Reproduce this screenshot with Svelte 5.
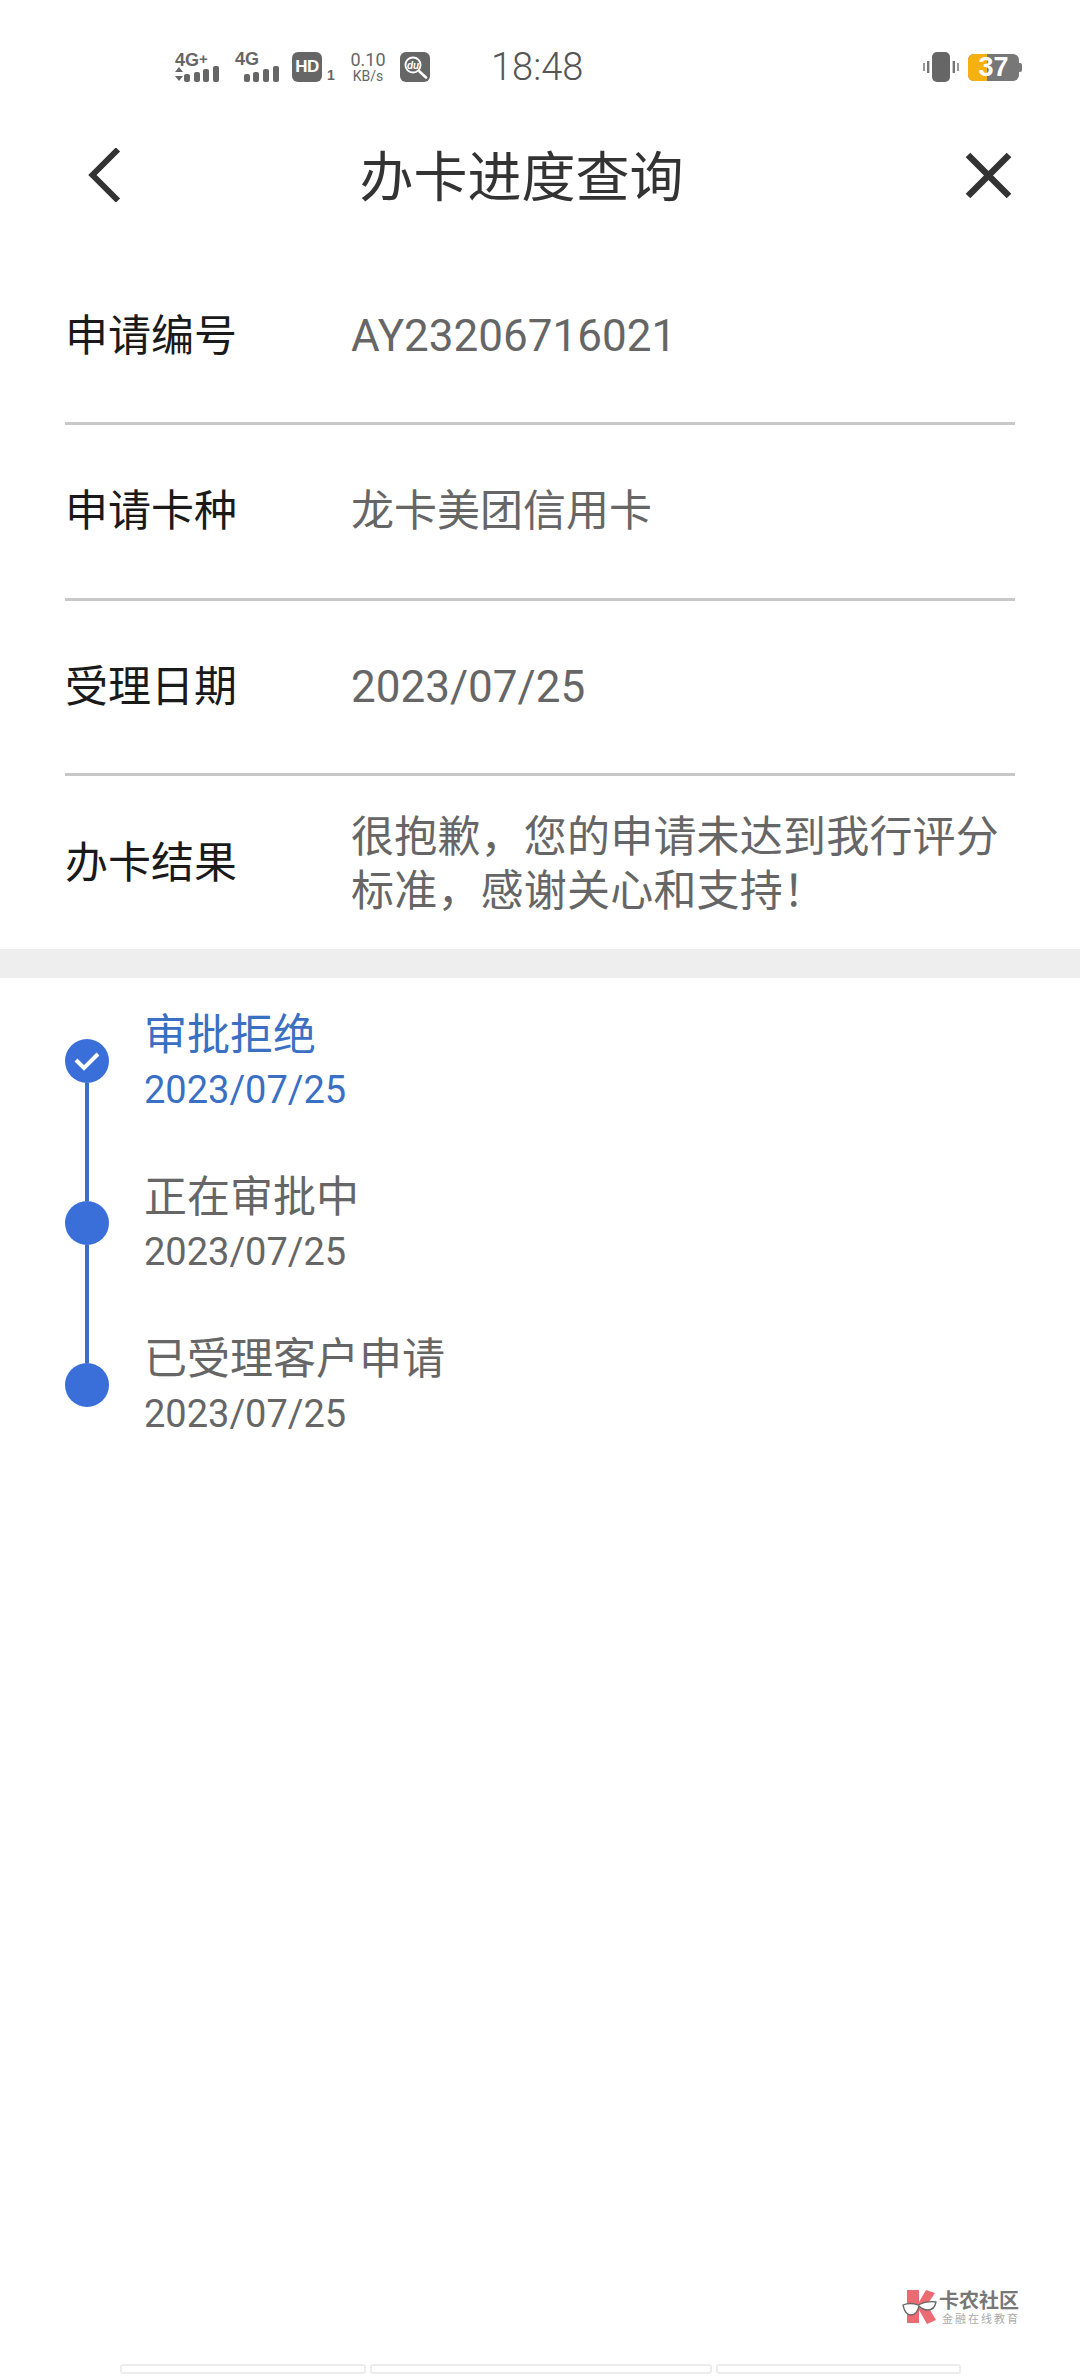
<script>
  const rows = [
    { label: '申请编号', value: 'AY23206716021', latin: true },
    { label: '申请卡种', value: '龙卡美团信用卡', latin: false },
    { label: '受理日期', value: '2023/07/25', latin: true },
  ];
  const steps = [
    { title: '审批拒绝', date: '2023/07/25', active: true },
    { title: '正在审批中', date: '2023/07/25', active: false },
    { title: '已受理客户申请', date: '2023/07/25', active: false },
  ];
</script>

<div class="page">
  <div class="status">
    <div class="net">
      <div class="sig">
        <span class="g">4G<b>+</b></span>
        <svg width="44" height="16" viewBox="0 0 44 16"><path d="M4 1l4 5H0zM4 15l4-5H0z" fill="#666"/><rect x="9" y="8" width="6" height="8" rx="2" fill="#666"/><rect x="19" y="6" width="6" height="10" rx="2" fill="#666"/><rect x="28" y="3" width="6" height="13" rx="2" fill="#666"/><rect x="38" y="0" width="6" height="16" rx="2" fill="#666"/></svg>
      </div>
      <div class="sig s2">
        <span class="g">4G</span>
        <svg class="bars" width="35" height="16" viewBox="0 0 35 16"><rect x="0" y="8" width="6" height="8" rx="2" fill="#666"/><rect x="9" y="6" width="6" height="10" rx="2" fill="#666"/><rect x="19" y="3" width="6" height="13" rx="2" fill="#666"/><rect x="29" y="0" width="6" height="16" rx="2" fill="#666"/></svg>
      </div>
      <div class="hd"><span class="hdbox">HD</span><span class="one">1</span></div>
      <div class="speed"><span>0.10</span><span class="kb">KB/s</span></div>
      <svg class="du" width="30" height="30" viewBox="0 0 30 30">
        <rect width="30" height="30" rx="6" fill="#666"/>
        <circle cx="13" cy="13" r="8.5" fill="#fff"/>
        <circle cx="13" cy="13" r="6.6" fill="#666"/>
        <path d="M19.5 19.5l6.5 6" stroke="#fff" stroke-width="2.6" stroke-linecap="round"/>
        <text x="13" y="16.5" text-anchor="middle" class="dutext">du</text>
      </svg>
    </div>
    <div class="time">18:48</div>
    <div class="right">
      <svg width="36" height="30" viewBox="0 0 36 30"><rect x="9" y="0" width="18" height="30" rx="5" fill="#666"/><rect x="4" y="9" width="2.4" height="12" fill="#777"/><rect x="0" y="11" width="2" height="8" fill="#999"/><rect x="29.6" y="9" width="2.4" height="12" fill="#777"/><rect x="34" y="11" width="2" height="8" fill="#999"/></svg>
      <div class="batt"><div class="fill"></div><span>37</span><i></i></div>
    </div>
  </div>

  <header class="nav">
    <svg class="back" width="33" height="54" viewBox="0 0 33 54"><path d="M30 1.5L4.5 27 30 52.5" fill="none" stroke="#333" stroke-width="6"/></svg>
    <h1>办卡进度查询</h1>
    <svg class="close" width="47" height="47" viewBox="0 0 47 47"><path d="M3 3l41 41M44 3L3 44" fill="none" stroke="#333" stroke-width="6.5"/></svg>
  </header>

  <section class="info">
    {#each rows as r}
      <div class="row">
        <div class="label">{r.label}</div>
        <div class="value" class:latin={r.latin}>{r.value}</div>
      </div>
    {/each}
    <div class="row last">
      <div class="label">办卡结果</div>
      <div class="value multi">很抱歉，您的申请未达到我行评分<br />标准，感谢关心和支持！</div>
    </div>
  </section>

  <div class="band"></div>

  <section class="steps">
    {#each steps as s, i}
      <div class="step" class:active={s.active}>
        <div class="rail">
          {#if i > 0}<div class="line up"></div>{/if}
          {#if i < steps.length - 1}<div class="line down"></div>{/if}
          <div class="dot">
            {#if s.active}
              <svg width="30" height="24" viewBox="0 0 30 24"><path d="M4 11l8 8L26 5" fill="none" stroke="#fff" stroke-width="4"/></svg>
            {/if}
          </div>
        </div>
        <div class="text">
          <div class="title">{s.title}</div>
          <div class="date">{s.date}</div>
        </div>
      </div>
    {/each}
  </section>

  <div class="spacer"></div>

  <div class="mark">
    <svg width="36" height="36" viewBox="0 0 36 36">
      <path d="M5 1h12v12L24 1l9 3-8 12 9 15-9 4-8-14v13H5z" fill="#ec6a72"/>
      <path d="M1 16c5-2 10-2 15 0 4-2 11-4 18-3-1 5-4 8-8 8-4 0-7-2-9-4-1 5-4 9-8 9-5 0-7-5-8-10z" fill="#fff" stroke="#666" stroke-width="1.3"/>
    </svg>
    <div class="mark-text">
      <div class="m1">卡农社区</div>
      <div class="m2">金融在线教育</div>
    </div>
  </div>

  <div class="tabs">
    <div class="tab t1"></div>
    <div class="tab t2"></div>
    <div class="tab t3"></div>
  </div>
</div>

<style>
  :global(body) { margin: 0; background: #fff; }
  .page {
    width: 1080px;
    height: 2376px;
    display: flex;
    flex-direction: column;
    background: #fff;
    font-family: "Noto Sans CJK SC", Roboto, sans-serif;
    overflow: hidden;
  }
  .status {
    height: 125px;
    padding: 9px 58px 0 175px;
    display: flex;
    align-items: center;
    box-sizing: border-box;
  }
  .net { display: flex; align-items: center; color: #666; width: 316px; flex: none; }
  .sig { display: flex; flex-direction: column; align-items: flex-start; width: 60px; flex: none; }
  .sig.s2 { width: 57px; }
  .bars { margin-left: 9px; }
  .g { font: 700 18px/14px "Liberation Sans", sans-serif; color: #666; height: 14px; }
  .g b { font-size: 15px; vertical-align: 2px; }
  .hd { display: flex; align-items: flex-end; width: 58px; flex: none; }
  .hdbox {
    width: 30px; height: 30px; border-radius: 6px; background: #666; color: #fff;
    font: 700 17px/30px "Liberation Sans", sans-serif; letter-spacing: -0.5px; text-align: center;
  }
  .one { font: 700 14px/14px "Liberation Sans", sans-serif; margin-left: 5px; color: #666; }
  .speed { display: flex; flex-direction: column; align-items: center; width: 36px; margin-right: 14px; font: 18px/18px Roboto, sans-serif; color: #666; flex: none; }
  .speed .kb { font-size: 14px; line-height: 14px; }
  .du { flex: none; }
  .dutext { font: italic 700 10px "Liberation Sans", sans-serif; fill: #fff; }
  .time { font: 300 38px/40px Roboto, sans-serif; color: #555; }
  .right { margin-left: auto; display: flex; align-items: center; gap: 9px; }
  .batt { position: relative; width: 51px; height: 27px; background: #777; border-radius: 6px; margin-right: 3px; }
  .fill { position: absolute; left: 0; top: 0; bottom: 0; width: 19px; background: #f6b00f; border-radius: 6px 0 0 6px; }
  .batt span { position: absolute; left: 0; right: 0; top: 0; text-align: center; font: 700 27px/27px "Liberation Sans", sans-serif; color: #fff; }
  .batt i { position: absolute; right: -3px; top: 9px; width: 3px; height: 9px; background: #777; border-radius: 0 2px 2px 0; }

  .nav {
    height: 100px;
    display: flex;
    align-items: center;
    justify-content: space-between;
    padding: 0 68px 0 88px;
    position: relative;
  }
  .nav h1 {
    position: absolute;
    left: 0; width: 1043px;
    margin: -3px 0 0;
    text-align: center;
    font-weight: 400;
    font-size: 54px;
    line-height: 70px;
    color: #333;
  }
  .back, .close { flex: none; }

  .info { padding: 0 65px; margin-top: 24.5px; }
  .row {
    height: 175.5px;
    display: flex;
    align-items: center;
    border-bottom: 3px solid #c8c8c8;
    box-sizing: border-box;
  }
  .row.last { border-bottom: none; height: 173px; }
  .label { width: 286px; flex: none; font-size: 43px; color: #1a1a1a; line-height: 56px; padding-bottom: 8px; }
  .value { font-size: 43px; color: #666; line-height: 54px; padding-bottom: 8px; }
  .value.latin { font-family: Roboto, sans-serif; font-size: 44px; padding-bottom: 0; }
  .multi { white-space: nowrap; padding-bottom: 6px; letter-spacing: 0.2px; }

  .band { height: 29px; background: #eeeeee; }

  .steps { padding: 20px 0 0 65px; }
  .step { display: flex; height: 162px; }
  .rail { width: 44px; flex: none; position: relative; margin-right: 35px; }
  .dot {
    position: absolute; left: 0; top: 41px; width: 44px; height: 44px; border-radius: 50%;
    background: #3a6ed8; display: flex; align-items: center; justify-content: center;
  }
  .line { position: absolute; left: 20px; width: 4px; background: #3a70c4; }
  .line.up { top: 0; height: 41px; }
  .line.down { top: 85px; bottom: 0; }
  .title { font-size: 43px; line-height: 56px; color: #666; }
  .date { font: 38px/52px Roboto, sans-serif; color: #666; margin-top: 5px; }
  .active .title, .active .date { color: #3a70c4; }
  .text { padding-top: 5px; }

  .spacer { flex: 1; }
  .mark { align-self: flex-end; display: flex; align-items: center; gap: 1px; margin-right: 60px; margin-bottom: 39px; }
  .m1 { font-size: 20px; line-height: 22px; font-weight: 700; color: #777; }
  .m2 { font-size: 11px; line-height: 14px; color: #aaa; letter-spacing: 2px; margin-left: 3px; }
  .tabs { display: flex; padding: 0 120px; gap: 4px; height: 12px; box-sizing: border-box; }
  .tab { height: 10px; border: 2px solid #ececec; border-radius: 3px; box-sizing: border-box; flex: none; }
  .t1 { width: 246px; }
  .t2 { width: 342px; }
  .t3 { width: 245px; }
</style>
